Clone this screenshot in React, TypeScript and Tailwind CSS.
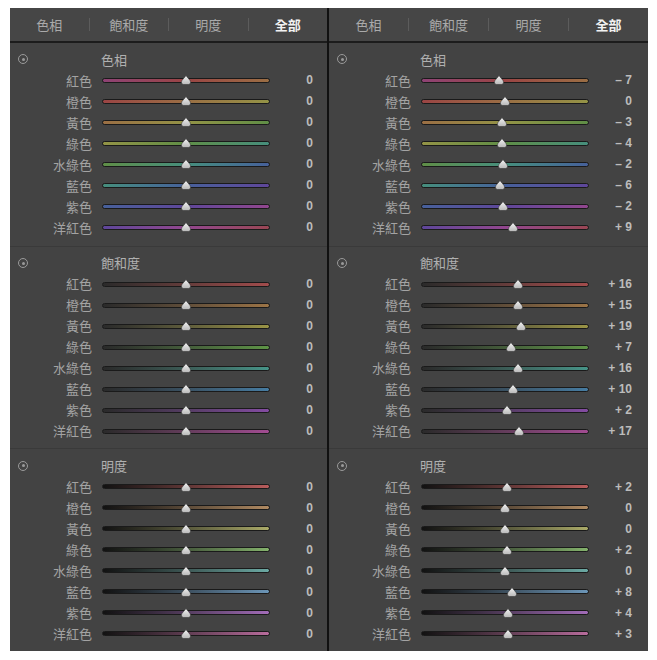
const font = "font-['Noto_Sans_CJK_TC','Noto_Sans',sans-serif]"

const names = ['紅色', '橙色', '黃色', '綠色', '水綠色', '藍色', '紫色', '洋紅色']

const hueTracks = [
  'from-[#8e4274] via-[#9a4444] to-[#9a6e44]',
  'from-[#9a4444] via-[#9a6e44] to-[#939346]',
  'from-[#9a6e44] via-[#939346] to-[#5f8e46]',
  'from-[#939346] via-[#5f8e46] to-[#468e7c]',
  'from-[#5f8e46] via-[#468e7c] to-[#46609a]',
  'from-[#468e7c] via-[#46609a] to-[#5e469a]',
  'from-[#46609a] via-[#5e469a] to-[#92468e]',
  'from-[#5e469a] via-[#92468e] to-[#9a4654]',
]

const satTracks = [
  'from-[#2a2a2a] to-[#a24c4c]',
  'from-[#2a2a2a] to-[#9c7446]',
  'from-[#2a2a2a] to-[#9a9446]',
  'from-[#2a2a2a] to-[#5e9446]',
  'from-[#2a2a2a] to-[#469488]',
  'from-[#2a2a2a] to-[#467ca2]',
  'from-[#2a2a2a] to-[#844ca2]',
  'from-[#2a2a2a] to-[#a24c92]',
]

const lumTracks = [
  'from-[#121212] to-[#b85c5c]',
  'from-[#121212] to-[#b08a62]',
  'from-[#121212] to-[#aaaa68]',
  'from-[#121212] to-[#84b26c]',
  'from-[#121212] to-[#6caaa4]',
  'from-[#121212] to-[#6c96b8]',
  'from-[#121212] to-[#a26cb8]',
  'from-[#121212] to-[#b86c9c]',
]

const zeros = [0, 0, 0, 0, 0, 0, 0, 0]

const left = {
  hue: zeros,
  sat: zeros,
  lum: zeros,
}

const right = {
  hue: [-7, 0, -3, -4, -2, -6, -2, 9],
  sat: [16, 15, 19, 7, 16, 10, 2, 17],
  lum: [2, 0, 0, 2, 0, 8, 4, 3],
}

function fmt(v: number) {
  if (v === 0) return '0'
  return v > 0 ? `+ ${v}` : `– ${-v}`
}

function Thumb({ value }: { value: number }) {
  return (
    <svg
      width="10"
      height="10"
      viewBox="0 0 10 10"
      className="absolute top-1/2 -translate-y-1/2 -ml-[5px]"
      style={{ left: `${50 + value / 2}%` }}
    >
      <defs>
        <linearGradient id="tg" x1="0" y1="0" x2="0" y2="1">
          <stop offset="0" stopColor="#f4f4f4" />
          <stop offset="1" stopColor="#b8b8b8" />
        </linearGradient>
      </defs>
      <path d="M5 0.5 C6 2.5 9.6 5 9.6 7.2 Q9.6 9.5 7.5 9.5 L2.5 9.5 Q0.4 9.5 0.4 7.2 C0.4 5 4 2.5 5 0.5Z" fill="url(#tg)" stroke="#2a2a2a" strokeWidth="0.5" />
    </svg>
  )
}

function Row({ name, track, value }: { name: string; track: string; value: number }) {
  return (
    <div className="flex h-[21px] items-center">
      <div className="w-[82px] text-right text-[13px] text-[#a3a3a3]">{name}</div>
      <div className="ml-[10px] relative w-[168px] h-[5px]">
        <div className={`h-full w-full rounded-full border border-[#1a1a1a] bg-linear-to-r ${track}`} />
        <Thumb value={value} />
      </div>
      <div className="w-[43px] text-right text-[12px] font-bold text-[#bcbcbc] font-['Liberation_Sans',sans-serif]">{fmt(value)}</div>
    </div>
  )
}

function Section({ title, tracks, values, first }: { title: string; tracks: string[]; values: number[]; first?: boolean }) {
  return (
    <div className={`h-[203px] pt-[6px] ${first ? '' : 'border-t border-[#3a3a3a]'}`}>
      <div className="flex h-[21px] items-center">
        <div className="w-[91px] pl-[8px]">
          <div className="flex h-[10px] w-[10px] items-center justify-center rounded-full border border-[#9a9a9a]">
            <div className="h-[3px] w-[3px] rounded-full bg-[#9a9a9a]" />
          </div>
        </div>
        <div className="text-[13px] text-[#b0b0b0]">{title}</div>
      </div>
      {names.map((n, i) => (
        <Row key={n} name={n} track={tracks[i]} value={values[i]} />
      ))}
    </div>
  )
}

function Tabs() {
  const sep = <div className="h-[13px] w-px bg-[#5c5c5c]" />
  return (
    <div className="flex h-[33px] items-center bg-[#464646] text-[13px] text-[#aaaaaa]">
      <div className="flex-1 text-center">色相</div>
      {sep}
      <div className="flex-1 text-center">飽和度</div>
      {sep}
      <div className="flex-1 text-center">明度</div>
      {sep}
      <div className="flex-1 text-center font-bold text-[#f2f2f2]">全部</div>
    </div>
  )
}

function Panel({ data, width }: { data: { hue: number[]; sat: number[]; lum: number[] }; width: string }) {
  return (
    <div className={`${width} flex flex-col bg-[#434343]`}>
      <Tabs />
      <div className="h-[2px] bg-[#1c1c1c]" />
      <Section title="色相" tracks={hueTracks} values={data.hue} first />
      <Section title="飽和度" tracks={satTracks} values={data.sat} />
      <Section title="明度" tracks={lumTracks} values={data.lum} />
    </div>
  )
}

export default function App() {
  return (
    <div className={`w-[657px] h-[660px] bg-white pt-[8px] pl-[10px] ${font}`}>
      <div className="flex h-[643px] overflow-hidden">
        <Panel data={left} width="w-[317px]" />
        <div className="w-[2px] bg-[#111]" />
        <Panel data={right} width="w-[319px]" />
      </div>
    </div>
  )
}
